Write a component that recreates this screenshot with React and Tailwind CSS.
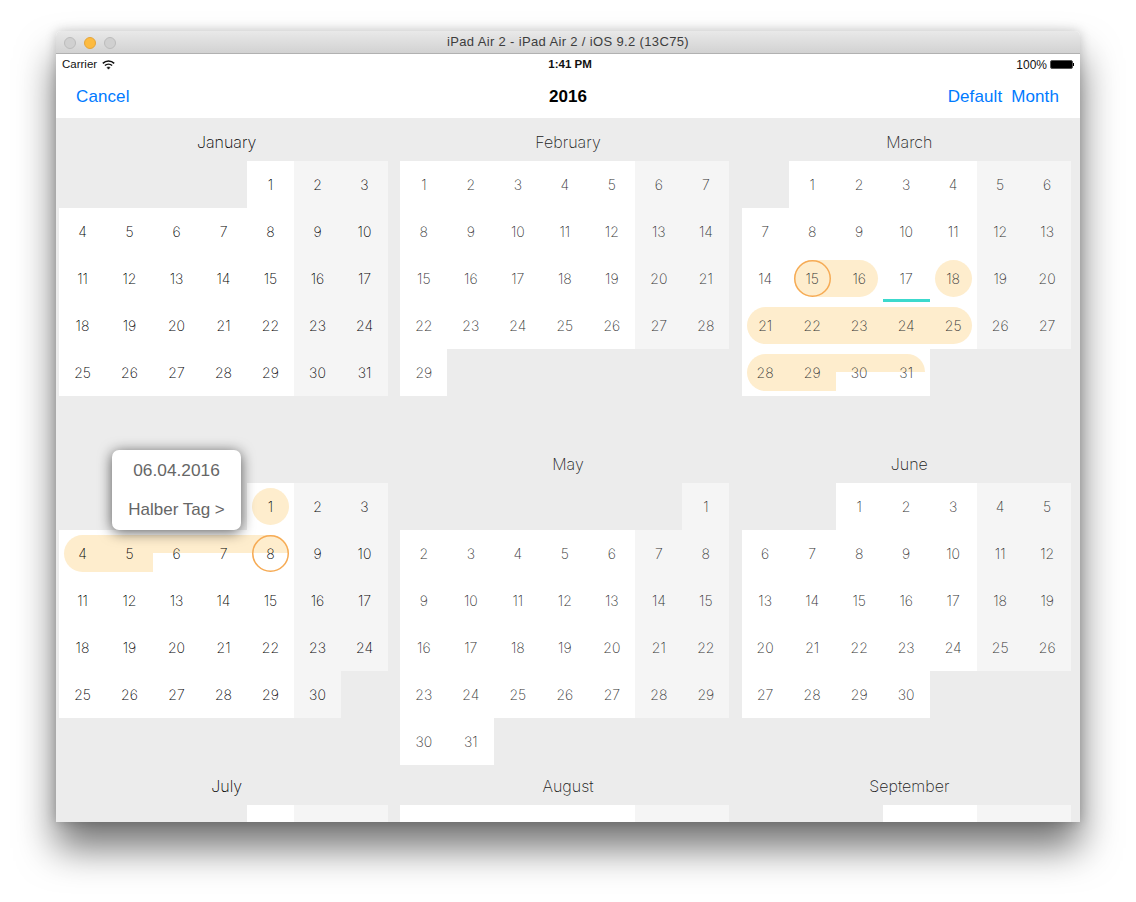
import React from "react";

const months = [
  { name: "January", offset: 4, days: 31, dark: true },
  { name: "February", offset: 0, days: 29 },
  { name: "March", offset: 1, days: 31 },
  { name: "", offset: 4, days: 30, dark: true, key: "April" }, // title sits under the popup
  { name: "May", offset: 6, days: 31 },
  { name: "June", offset: 2, days: 30 },
  { name: "July", offset: 4, days: 3, dark: true, peek: true },
  { name: "August", offset: 0, days: 7, peek: true },
  { name: "September", offset: 3, days: 4, peek: true },
];

const barStyles = {
  start: "left-[5px] right-0 top-[5px] bottom-[5px] rounded-l-full",
  middle: "left-0 right-0 top-[5px] bottom-[5px]",
  end: "left-0 right-[5px] top-[5px] bottom-[5px] rounded-r-full",
  single: "left-[5px] right-[5px] top-[5px] bottom-[5px] rounded-full",
  halfMiddle: "left-0 right-0 top-[5px] h-[18px]",
  halfEnd: "left-0 right-[5px] top-[5px] h-[18px] rounded-tr-[18px]",
};

const marks = {
  March: {
    15: { bar: "start", ring: true },
    16: { bar: "end" },
    17: { today: true },
    18: { bar: "single" },
    21: { bar: "start" },
    22: { bar: "middle" },
    23: { bar: "middle" },
    24: { bar: "middle" },
    25: { bar: "end" },
    28: { bar: "start" },
    29: { bar: "middle" },
    30: { bar: "halfMiddle" },
    31: { bar: "halfEnd" },
  },
  April: {
    1: { bar: "single" },
    4: { bar: "start" },
    5: { bar: "middle" },
    6: { bar: "halfMiddle" },
    7: { bar: "halfMiddle" },
    8: { bar: "halfEnd", ring: true },
  },
};

const DayCell = ({ day, col, dark, mark, peek }) => {
  const weekend = col >= 5;
  return (
    <div
      className={`relative h-[47px] flex items-center justify-center ${
        weekend ? "bg-[#f5f5f5]" : "bg-white"
      }`}
    >
      {mark?.bar && (
        <div className={`absolute bg-[#feedcd] ${barStyles[mark.bar]}`} />
      )}
      {mark?.ring && (
        <svg className="absolute left-[5px] top-[5px]" width="37" height="37" viewBox="0 0 37 37" fill="none">
          <circle cx="18.5" cy="18.5" r="17.75" stroke="#f6ab55" strokeWidth="1.5" />
        </svg>
      )}
      {mark?.today && (
        <div className="absolute left-0 right-0 bottom-0 h-[3px] bg-[#3cd9cd]" />
      )}
      {!peek && (
        <span
          className={`relative text-[14px] font-extralight ${
            dark ? "text-[#000000]" : "text-[#333333]"
          }`}
        >
          {day}
        </span>
      )}
    </div>
  );
};

const Month = ({ month }) => {
  const cells = [];
  for (let i = 0; i < month.offset; i++) {
    cells.push(<div key={`e${i}`} className="h-[47px]" />);
  }
  for (let d = 1; d <= month.days; d++) {
    cells.push(
      <DayCell
        key={d}
        day={d}
        col={(month.offset + d - 1) % 7}
        dark={month.dark}
        peek={month.peek}
        mark={marks[month.key || month.name]?.[d]}
      />
    );
  }
  return (
    <div className="h-[322px]">
      <div
        className={`h-[43px] pt-[5px] flex items-center justify-center text-[16px] font-extralight ${
          month.dark ? "text-[#000000]" : "text-[#222222]"
        }`}
      >
        {month.name}
      </div>
      <div className="ml-[3px] w-[329px] grid grid-cols-7">{cells}</div>
    </div>
  );
};

const Wifi = () => (
  <svg width="13" height="10" viewBox="0 0 13 10" fill="none" stroke="#111" strokeWidth="1.5">
    <path d="M0.8 3.4 C4 0.3 9 0.3 12.2 3.4" />
    <path d="M2.9 5.5 C4.9 3.7 8.1 3.7 10.1 5.5" />
    <path d="M6.5 9.2 L4.9 7.5 C5.8 6.8 7.2 6.8 8.1 7.5 Z" fill="#111" strokeWidth="0.5" />
  </svg>
);

const App = () => {
  return (
    <div
      className="relative w-[1136px] h-[902px] bg-white pt-[31px] pl-[56px] overflow-hidden"
      style={{ fontFamily: '"Inter", "Liberation Sans", sans-serif' }}
    >
      <div className="relative w-[1024px] h-[791px] rounded-t-[5px] overflow-hidden bg-white shadow-[0_26px_38px_rgba(0,0,0,0.55),0_0_12px_rgba(0,0,0,0.2)]">
        {/* title bar */}
        <div className="relative h-[23px] flex items-center justify-center bg-gradient-to-b from-[#e9e9e9] to-[#d2d2d2] border-b border-[#b1b1b1]">
          <div className="absolute left-[8px] top-[6px] flex gap-[8px]">
            <div className="w-[12px] h-[12px] rounded-full bg-[#d0d0d0] border border-[#bcbcbc]" />
            <div className="w-[12px] h-[12px] rounded-full bg-[#fdbb40] border border-[#e5a53a]" />
            <div className="w-[12px] h-[12px] rounded-full bg-[#d0d0d0] border border-[#bcbcbc]" />
          </div>
          <span
            className="text-[13px] tracking-[0.35px] text-[#3d3d3d]"
            style={{ fontFamily: '"Liberation Sans", sans-serif' }}
          >
            iPad Air 2 - iPad Air 2 / iOS 9.2 (13C75)
          </span>
        </div>

        {/* status bar */}
        <div
          className="relative h-[20px] pt-[1px] flex items-center justify-between pl-[6px] pr-[6px] text-[11.5px] text-[#111111]"
          style={{ fontFamily: '"Liberation Sans", sans-serif' }}
        >
          <div className="flex items-center gap-[5px]">
            <span>Carrier</span>
            <Wifi />
          </div>
          <span className="absolute left-0 right-0 text-center font-bold pl-[4px]">1:41 PM</span>
          <div className="flex items-center gap-[3px]">
            <span className="text-[12px]">100%</span>
            <div className="flex items-center">
              <div className="w-[23px] h-[9px] bg-black rounded-[2px] border border-[#555555]" />
              <div className="w-[1px] h-[3px] bg-black" />
            </div>
          </div>
        </div>

        {/* nav bar */}
        <div
          className="relative h-[44px] pt-[1px] flex items-center justify-between pl-[20px] pr-[21px] text-[17px] tracking-[0.1px] text-[#007aff]"
          style={{ fontFamily: '"Liberation Sans", sans-serif' }}
        >
          <span>Cancel</span>
          <span className="absolute left-0 right-0 text-center font-bold text-black">2016</span>
          <div className="flex gap-[9px]">
            <span>Default</span>
            <span>Month</span>
          </div>
        </div>

        {/* calendar */}
        <div className="relative h-[704px] bg-[#ececec] overflow-hidden">
          <div className="grid grid-cols-3">
            {months.map((m) => (
              <Month key={m.key || m.name} month={m} />
            ))}
          </div>
          <div
            className="absolute left-[56px] top-[332px] w-[129px] h-[80px] rounded-[7px] bg-white shadow-[0_2px_14px_rgba(0,0,0,0.65)] flex flex-col items-center text-[#666666]"
            style={{ fontFamily: '"Liberation Sans", sans-serif' }}
          >
            <div className="h-[40px] pt-[1px] flex items-center text-[17.3px]">06.04.2016</div>
            <div className="h-[40px] flex items-center text-[17px]">Halber Tag &gt;</div>
          </div>
        </div>
      </div>
    </div>
  );
};

export default App;
